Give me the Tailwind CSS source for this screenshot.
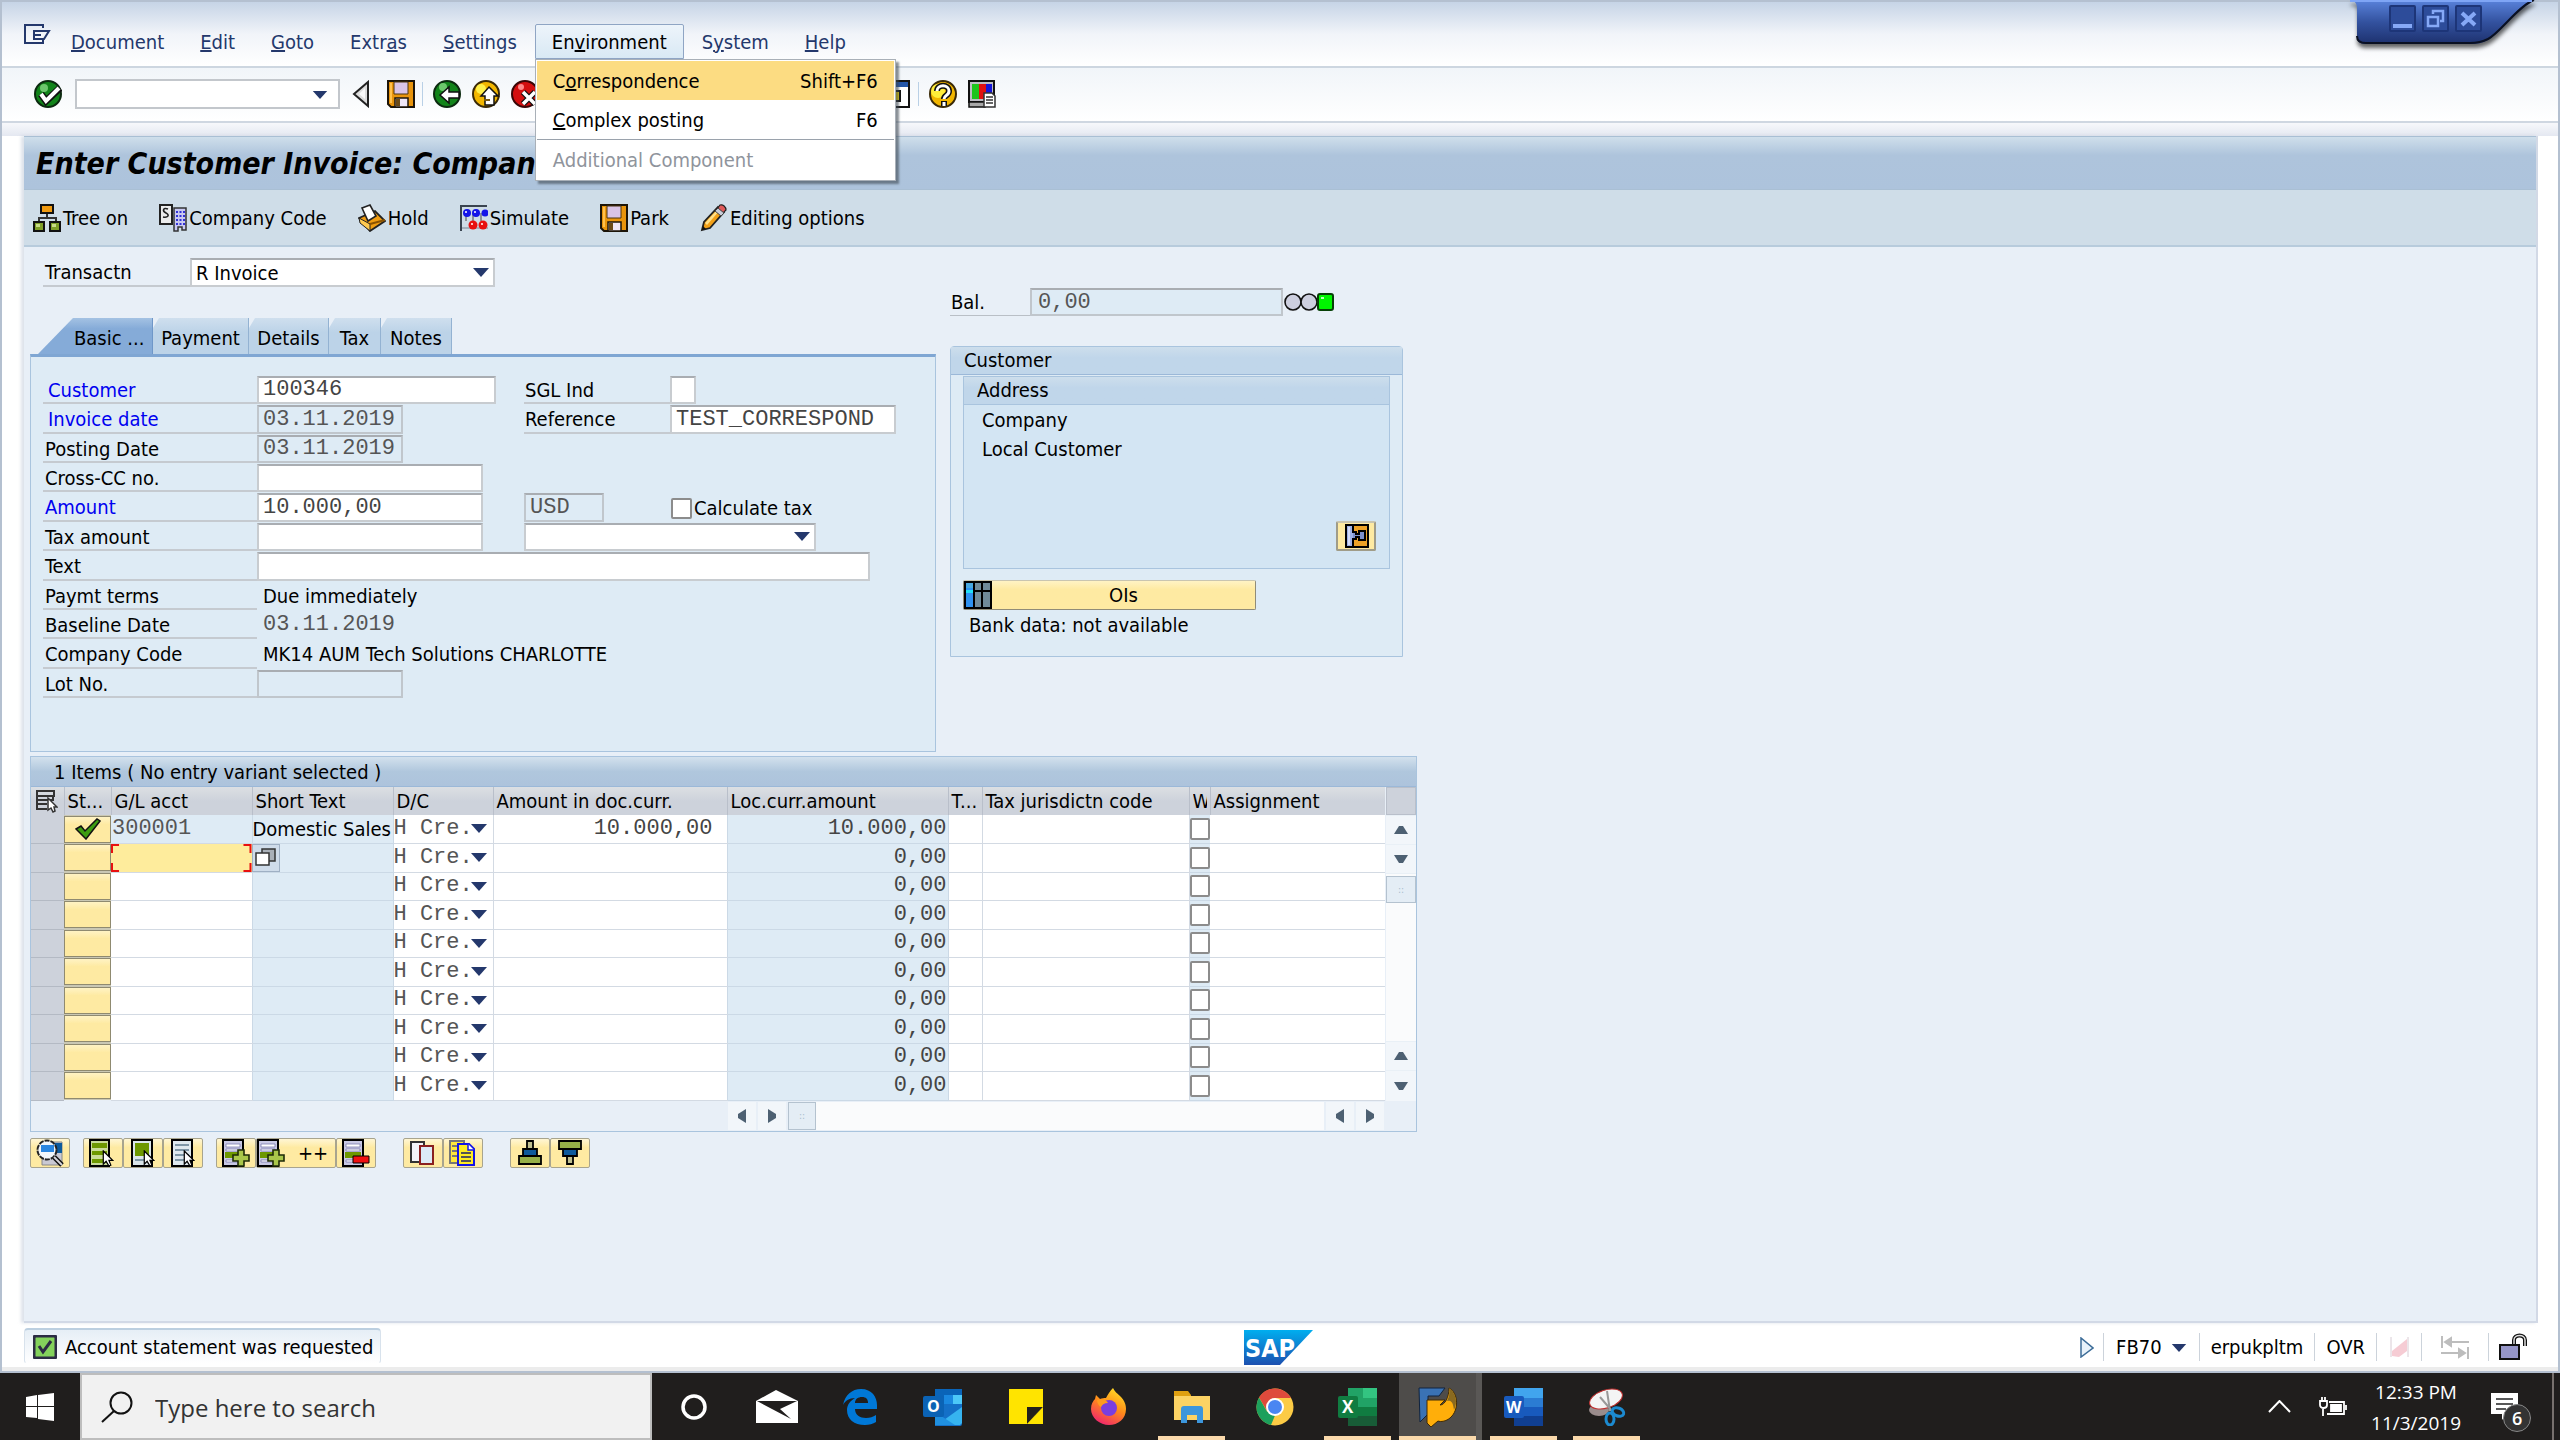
<!DOCTYPE html>
<html lang="en">
<head>
<meta charset="UTF-8" />
<meta name="viewport" content="width=device-width, initial-scale=1" />
<title>Enter Customer Invoice</title>
<script src="https://cdn.jsdelivr.net/npm/@tailwindcss/browser@4"></script>
</head>
<body class="min-h-screen flex flex-col bg-[#201e1d] text-black text-[20px] leading-6 font-['DejaVu_Sans_Condensed','Noto_Sans',sans-serif]">

<!-- shared icons -->
<svg class="hidden">
  <symbol id="arrow" viewBox="0 0 16 10"><path d="M0 1h16L8 10z" fill="#24386c"/></symbol>
  <symbol id="floppy" viewBox="0 0 28 28">
    <path d="M1 1h26v26H4l-3-3z" fill="#e8940c" stroke="#1c1408" stroke-width="2"/>
    <path d="M3 3h2v20H3z" fill="#ffc04c"/>
    <path d="M7 2h14v12H7z" fill="#d9c4e6" stroke="#4a3410"/>
    <path d="M8 18h13v9H8z" fill="#efe6f6" stroke="#1c1408" stroke-width="1.5"/>
    <path d="M9 19h4v7H9z" fill="#6a4a18"/>
  </symbol>
  <symbol id="cursor" viewBox="0 0 12 18"><path d="M1 1v14l3-3 3 5 2-1-2-5h4z" fill="#fff" stroke="#000" stroke-width="1.3"/></symbol>
  <symbol id="plus" viewBox="0 0 18 18"><path d="M6 1h6v5h5v6h-5v5H6v-5H1V6h5z" fill="#a9c64a" stroke="#1e2a08" stroke-width="1.6"/></symbol>
  <symbol id="rows" viewBox="0 0 22 28">
    <path d="M1 1h20v26H1z" fill="#c9c9e4" stroke="#000" stroke-width="2"/>
    <path d="M4 5h14v3H4zM4 10h14v2H4zM4 21h14v2H4z" fill="#fff" stroke="#6e6ea8" stroke-width=".7"/>
    <path d="M3 13h16v6H3z" fill="#6d9800"/>
  </symbol>
</svg>

<div class="flex-1 flex flex-col bg-white border-2 border-[#b4c0d0] relative">

  <header class="h-[66px] flex items-end pb-[7px] pl-[22px] border-b-2 border-[#cdd6e0] bg-linear-to-b from-[#c6d4e6] via-[#f1f4f9] to-white text-[#24386c]">
    <button aria-label="Window menu" class="self-start mt-[22px] w-[29px]">
      <svg class="w-[27px] h-[21px]" viewBox="0 0 27 21" fill="none" stroke="#24386c" stroke-width="2"><path d="M19 4V1H1v18h18v-3"/><path d="M10 7h15l-5 8H10z"/><path d="M10 11h7"/></svg>
    </button>
    <nav class="flex h-[35px]">
      <button class="px-[18px]"><u>D</u>ocument</button>
      <button class="px-[18px]"><u>E</u>dit</button>
      <button class="px-[18px]"><u>G</u>oto</button>
      <button class="px-[18px]">Extr<u>a</u>s</button>
      <button class="px-[18px]"><u>S</u>ettings</button>
      <div class="relative">
        <button class="h-[35px] px-4 border border-[#8fa5c4] rounded-t-xs bg-linear-to-b from-[#edf4fb] to-[#d9e9f4] text-black">En<u>v</u>ironment</button>
        <div role="menu" class="absolute z-10 top-full left-0 w-[361px] border border-[#a9b0b8] bg-white shadow-[3px_3px_2px_rgba(60,70,80,0.6)] text-black p-px">
          <button role="menuitem" class="w-full h-[39px] px-4 flex items-center justify-between bg-[#fcdc82]"><span>C<u>o</u>rrespondence</span><span>Shift+F6</span></button>
          <button role="menuitem" class="w-full h-[39px] px-4 flex items-center justify-between"><span><u>C</u>omplex posting</span><span>F6</span></button>
          <button role="menuitem" disabled class="w-full h-10 px-4 flex items-center border-t border-[#9aa2ac] text-[#8f949c]">Additional Component</button>
        </div>
      </div>
      <button class="px-[18px]">S<u>y</u>stem</button>
      <button class="px-[18px]"><u>H</u>elp</button>
    </nav>
  </header>

  <!-- window buttons -->
  <div class="absolute -top-[2px] right-[20px] w-[192px] h-[52px]">
    <svg class="absolute inset-0 drop-shadow-[1px_4px_2px_rgba(0,0,0,0.6)]" viewBox="0 0 192 52">
      <defs><linearGradient id="wb" x2="0" y2="1"><stop stop-color="#5a83dc"/><stop offset=".5" stop-color="#33529f"/><stop offset="1" stop-color="#1d316e"/></linearGradient></defs>
      <path d="M4 0h184c-14 6-34 34-46 40-6 3-10 4-18 4H20c-6 0-9-2-9-7V8c0-5-3-8-7-8z" fill="url(#wb)"/>
      <path d="M11 36c0 5 3 7 9 7h104c8 0 12-1 18-4 12-6 30-33 46-39" fill="none" stroke="#0a1022" stroke-width="2"/>
      <path d="M4 1h182" stroke="#7fa5f5" stroke-width="2"/>
    </svg>
    <div class="absolute left-[43px] top-[5px] flex gap-[6px]">
      <button aria-label="Minimize" class="size-[27px] rounded-xs border-2 border-[#1d3578] bg-[#2d4c9a]"><svg viewBox="0 0 23 23"><path d="M2 17h19v4H2z" fill="#86a9f7"/></svg></button>
      <button aria-label="Restore" class="size-[27px] rounded-xs border-2 border-[#1d3578] bg-[#2d4c9a]"><svg viewBox="0 0 23 23" fill="none" stroke="#86a9f7" stroke-width="2.5"><path d="M4 10h10v9H4zM9 7V4h10v10h-3"/></svg></button>
      <button aria-label="Close" class="size-[27px] rounded-xs border-2 border-[#1d3578] bg-[#2d4c9a]"><svg viewBox="0 0 23 23" stroke="#86a9f7" stroke-width="4"><path d="M5 6l13 12M18 6L5 18"/></svg></button>
    </div>
  </div>

  <div class="h-[55px] flex items-center pl-8 pb-[2px] border-b-2 border-[#cfd7e1] bg-linear-to-b from-[#f1f5f9] to-white">
    <button aria-label="Enter" class="size-7">
      <svg viewBox="0 0 28 28"><circle cx="14" cy="14" r="13" fill="#12841a" stroke="#0c2a10" stroke-width="2"/><circle cx="10" cy="8" r="4" fill="#6cc76c"/><path d="M7 14l5 7L26 8" fill="none" stroke="#111" stroke-width="7"/><path d="M7 14l5 7L25 8" fill="none" stroke="#fff" stroke-width="4"/></svg>
    </button>
    <div class="relative ml-[13px]">
      <select aria-label="Command" class="block appearance-none w-[265px] h-[30px] border-2 border-[#c3c7cc] bg-white"><option></option></select>
      <svg class="absolute right-3 top-[11px] w-4 h-[9px] pointer-events-none"><use href="#arrow"/></svg>
    </div>
    <button aria-label="Collapse" class="ml-3 w-[18px] h-7"><svg viewBox="0 0 18 28"><path d="M16 2v24L2 14z" fill="#dcdcdc" stroke="#222" stroke-width="2"/><path d="M13 8v11l-6-5z" fill="#f8f8f8"/></svg></button>
    <button aria-label="Save" class="ml-[17px] size-7"><svg viewBox="0 0 28 28"><use href="#floppy"/></svg></button>
    <span class="ml-[7px] w-px h-6 bg-[#b9d0e6]"></span>
    <button aria-label="Back" class="ml-[10px] size-7">
      <svg viewBox="0 0 28 28"><circle cx="14" cy="14" r="13" fill="#12841a" stroke="#0c2a10" stroke-width="2"/><circle cx="10" cy="7" r="4" fill="#6cc76c"/><path d="M7 15l9-8v5h10v6H16v5z" fill="#fff" stroke="#111" stroke-width="1.5"/></svg>
    </button>
    <button aria-label="Exit" class="ml-[11px] size-7">
      <svg viewBox="0 0 28 28"><circle cx="14" cy="14" r="13" fill="#f2b600" stroke="#3a2a08" stroke-width="2"/><circle cx="9" cy="9" r="5" fill="#fff04a"/><path d="M17 7l9 9h-4v9h-9v-9H9z" fill="#fff" stroke="#111" stroke-width="1.5"/><path d="M12 20h6" stroke="#7a5a10" stroke-width="2"/></svg>
    </button>
    <button aria-label="Cancel" class="ml-[11px] size-7">
      <svg viewBox="0 0 28 28"><circle cx="14" cy="14" r="13" fill="#d40f0f" stroke="#3a0606" stroke-width="2"/><circle cx="10" cy="7" r="3" fill="#ff8a8a"/><path d="M12 12l12 12M24 12L12 24" stroke="#111" stroke-width="6"/><path d="M12 12l12 12M24 12L12 24" stroke="#fff" stroke-width="3.5"/></svg>
    </button>
    <button aria-label="New session" class="ml-[343px] size-7">
      <svg viewBox="0 0 28 28"><path d="M1 1h26v26H1z" fill="#fff" stroke="#111" stroke-width="2"/><path d="M2 2h24v5H2z" fill="#2255a8"/><path d="M8 11h10v10H8z" fill="#ffe000" stroke="#111" stroke-width="2"/></svg>
    </button>
    <span class="ml-2 w-px h-6 bg-[#b9d0e6]"></span>
    <button aria-label="Help" class="ml-[10px] size-7">
      <svg viewBox="0 0 28 28"><circle cx="14" cy="14" r="13" fill="#f2b600" stroke="#3a2a08" stroke-width="2"/><circle cx="9" cy="11" r="7" fill="#ffee3a"/><path d="M8 11c0-7 12-7 12 0 0 5-5 4-5 8M15 21v5" fill="none" stroke="#111" stroke-width="6"/><path d="M8 11c0-7 12-7 12 0 0 5-5 4-5 8M15 22v4" fill="none" stroke="#fff" stroke-width="3"/></svg>
    </button>
    <button aria-label="Customize layout" class="ml-[11px] size-7">
      <svg viewBox="0 0 28 28"><path d="M1 1h25v21H1z" fill="#bdbdc4" stroke="#111" stroke-width="2"/><path d="M4 4h7v15H4z" fill="#1cc41c"/><path d="M11 4h7v15h-7z" fill="#e01010"/><path d="M18 4h6v15h-6z" fill="#1414d8"/><path d="M1 22h16v5H1z" fill="#a8a8a8" stroke="#111" stroke-width="1.5"/><path d="M16 13h8l3 3v11H16z" fill="#fff" stroke="#333" stroke-width="1.5"/><path d="M18 17h7M18 20h7M18 23h7" stroke="#333" stroke-width="1.3"/></svg>
    </button>
  </div>

  <div class="h-[13px] bg-linear-to-b from-[#f7f8fb] to-[#e4e8f1]"></div>

  <main class="flex-1 flex flex-col ml-[22px] mr-[20px] bg-[#e8eff7] border-r-2 border-b-2 border-[#d2d9e6] shadow-[-3px_0_3px_rgba(190,200,215,0.5)]">
    <h1 class="h-[54px] pl-3 pt-[2px] flex items-center border-y border-[#a9bfd4] bg-linear-to-b from-[#cfdfeb] via-[#aec4dc] via-35% to-[#adc3dc] text-[30px] font-bold italic font-['DejaVu_Sans_Condensed','Open_Sans',sans-serif]">Enter Customer Invoice: Company</h1>

    <div class="h-[57px] pl-[9px] flex items-center gap-[31px] bg-[#cfdde8] border-b-2 border-[#b7cbdc]">
      <button class="flex items-center gap-[2px]">
        <svg class="size-7" viewBox="0 0 28 28"><path d="M14 9v5M6 19v-5h17v5" fill="none" stroke="#333" stroke-width="2"/><path d="M8 1h12v8H8z" fill="#f09a10" stroke="#111" stroke-width="2"/><path d="M1 18h10v9H1zM17 18h10v9H17z" fill="#7f9f28" stroke="#111" stroke-width="2"/><path d="M3 20h4v3H3zM19 20h4v3h-4z" fill="#c8dc88"/></svg>Tree on
      </button>
      <button class="flex items-center gap-[2px]">
        <svg class="size-7" viewBox="0 0 28 28"><path d="M1 1h12v19H1z" fill="#ececec" stroke="#222" stroke-width="2"/><path d="M9 5c-5-2-6 2-2 4s2 5-3 4" fill="none" stroke="#222" stroke-width="1.6"/><path d="M15 4h12v22h-4v-3h-4v4h-4z" fill="#c9c9f2" stroke="#333" stroke-width="1.5"/><path d="M17 8h9M17 12h9M17 16h9M17 20h9" stroke="#3232d8" stroke-width="2" stroke-dasharray="2 1.5"/></svg>Company Code
      </button>
      <button class="flex items-center gap-[2px]">
        <svg class="size-7" viewBox="0 0 28 28"><path d="M1 14L17 7l10 10-15 10z" fill="#ef9c10" stroke="#222" stroke-width="1.8"/><path d="M1 14l11 6v7L2 19z" fill="#ffca50" stroke="#222"/><path d="M4 4l8-3 6 11-8 5z" fill="#fff" stroke="#222" stroke-width="1.6"/><path d="M12 20l15-4" stroke="#8a5200" stroke-width="2"/></svg>Hold
      </button>
      <button class="flex items-center gap-[2px]">
        <svg class="size-7" viewBox="0 0 28 28"><path d="M1 27V2h26" fill="none" stroke="#3a4450" stroke-width="2"/><path d="M6 9v8M13 9v8M21 9v8" stroke="#444"/><path d="M2 24h26" stroke="#7a8794"/><g fill="#1414e8"><circle cx="7" cy="9" r="4"/><circle cx="16" cy="9" r="4"/><circle cx="25" cy="9" r="3.5"/></g><g fill="#e81010"><circle cx="13" cy="21" r="4.5"/><circle cx="23" cy="21" r="4.5"/></g><g fill="#fff"><circle cx="6" cy="8" r="1"/><circle cx="15" cy="8" r="1"/><circle cx="12" cy="20" r="1"/><circle cx="22" cy="20" r="1"/></g></svg>Simulate
      </button>
      <button class="flex items-center gap-[2px]"><svg class="size-7" viewBox="0 0 28 28"><use href="#floppy"/></svg>Park</button>
      <button class="flex items-center gap-[2px]">
        <svg class="size-7" viewBox="0 0 28 28"><path d="M2 26l2-8L18 3l6 5L10 24z" fill="#f2a018" stroke="#222" stroke-width="1.8"/><path d="M5 19L18 5l2 1L7 21z" fill="#ffe08a"/><path d="M17 5l3-4c3-1 6 2 6 5l-3 3z" fill="#e05a5a" stroke="#222" stroke-width="1.2"/><path d="M15 7l3-3 6 5-3 3z" fill="#c9ccd8" stroke="#444"/><path d="M2 26l1-4 3 3z" fill="#111"/></svg>Editing options
      </button>
    </div>

    <div class="flex gap-[14px] pl-[6px]">
      <div class="w-[906px] pt-[11px]">
        <div class="flex pl-[13px]">
          <label for="transactn" class="w-[147px] h-[29px] pl-[2px] leading-7 border-b-2 border-[#c5cad0]">Transactn</label>
          <div class="relative">
            <select id="transactn" class="block appearance-none w-[305px] h-[29px] pl-1 leading-6 border-2 border-t-[#a9adb2] border-[#c8ccd0] bg-white"><option>R Invoice</option></select>
            <svg class="absolute right-[6px] top-[9px] w-4 h-[10px] pointer-events-none"><use href="#arrow"/></svg>
          </div>
        </div>

        <div role="tablist" class="mt-[31px] pl-2 flex h-9">
          <button role="tab" aria-selected="true" class="w-[115px] pl-9 pt-[3px] text-left whitespace-nowrap border-r border-[#6f97c8] bg-linear-to-b from-[#a4c2e3] to-[#85abd8] to-30% [clip-path:polygon(35px_0,100%_0,100%_100%,0_100%)]">Basic ...</button>
          <button role="tab" class="w-[96px] pt-[3px] border-r border-[#93b2d2] bg-linear-to-b from-[#cfdfee] to-[#bcd3e8] to-40% [clip-path:polygon(6px_0,100%_0,100%_100%,0_100%,0_10px)]">Payment</button>
          <button role="tab" class="w-[80px] pt-[3px] border-r border-[#93b2d2] bg-linear-to-b from-[#cfdfee] to-[#bcd3e8] to-40% [clip-path:polygon(6px_0,100%_0,100%_100%,0_100%,0_10px)]">Details</button>
          <button role="tab" class="w-[52px] pt-[3px] border-r border-[#93b2d2] bg-linear-to-b from-[#cfdfee] to-[#bcd3e8] to-40% [clip-path:polygon(6px_0,100%_0,100%_100%,0_100%,0_10px)]">Tax</button>
          <button role="tab" class="w-[71px] pt-[3px] border-r border-[#93b2d2] bg-linear-to-b from-[#cfdfee] to-[#bcd3e8] to-40% [clip-path:polygon(6px_0,100%_0,100%_100%,0_100%,0_10px)]">Notes</button>
        </div>

        <form class="h-[398px] pl-3 pt-[19px] border border-[#a9c4de] border-t-3 border-t-[#7fa6d3] bg-[#deebf5]">
          <div class="grid grid-cols-[214px_267px_146px_1fr] grid-rows-[repeat(11,minmax(0,1fr))] h-[323px] leading-[28px]">
            <label for="customer" class="mb-px pl-[5px] text-[#0000f0] border-b-2 border-[#c5cad0]">Customer</label>
            <input id="customer" value="100346" class="mb-px w-[239px] px-1 border-2 border-t-[#a9adb2] border-[#c8ccd0] bg-white text-[22px] text-[#444] font-['Liberation_Mono',monospace]" />
            <label for="sgl" class="mb-px pl-px border-b-2 border-[#c5cad0]">SGL Ind</label>
            <input id="sgl" class="mb-px w-[26px] border-2 border-t-[#a9adb2] border-[#c8ccd0] bg-white" />

            <label for="invdate" class="mb-px pl-[5px] text-[#0000f0] border-b-2 border-[#c5cad0]">Invoice date</label>
            <input id="invdate" value="03.11.2019" readonly class="mb-px w-[146px] px-1 border-2 border-t-[#a9adb2] border-[#c0c6cc] text-[22px] text-[#555] font-['Liberation_Mono',monospace]" />
            <label for="reference" class="mb-px pl-px border-b-2 border-[#c5cad0]">Reference</label>
            <input id="reference" value="TEST_CORRESPOND" class="mb-px w-[226px] px-1 border-2 border-t-[#a9adb2] border-[#c8ccd0] bg-white text-[22px] text-[#444] font-['Liberation_Mono',monospace]" />

            <label for="postdate" class="mb-px pl-[2px] border-b-2 border-[#c5cad0]">Posting Date</label>
            <input id="postdate" value="03.11.2019" readonly class="col-span-3 mb-px w-[146px] px-1 border-2 border-t-[#a9adb2] border-[#c0c6cc] text-[22px] text-[#555] font-['Liberation_Mono',monospace]" />

            <label for="crosscc" class="mb-px pl-[2px] border-b-2 border-[#c5cad0]">Cross-CC no.</label>
            <input id="crosscc" class="col-span-3 mb-px w-[226px] border-2 border-t-[#a9adb2] border-[#c8ccd0] bg-white" />

            <label for="amount" class="mb-px pl-[2px] text-[#0000f0] border-b-2 border-[#c5cad0]">Amount</label>
            <input id="amount" value="10.000,00" class="mb-px w-[226px] px-1 border-2 border-t-[#a9adb2] border-[#c8ccd0] bg-white text-[22px] text-[#444] font-['Liberation_Mono',monospace]" />
            <input aria-label="Currency" value="USD" readonly class="mb-px w-20 px-1 border-2 border-t-[#a9adb2] border-[#c0c6cc] text-[22px] text-[#555] font-['Liberation_Mono',monospace]" />
            <label class="flex items-center gap-[2px] pl-px whitespace-nowrap"><input type="checkbox" class="appearance-none size-[21px] rounded-xs border-2 border-[#8c8c8c] bg-white" />Calculate tax</label>

            <label for="taxamount" class="mb-px pl-[2px] border-b-2 border-[#c5cad0]">Tax amount</label>
            <input id="taxamount" class="mb-px w-[226px] border-2 border-t-[#a9adb2] border-[#c8ccd0] bg-white" />
            <div class="col-span-2 relative mb-px w-[292px]">
              <select aria-label="Tax code" class="block appearance-none size-full border-2 border-t-[#a9adb2] border-[#c8ccd0] bg-white"><option></option></select>
              <svg class="absolute right-[6px] top-2 w-4 h-[10px] pointer-events-none"><use href="#arrow"/></svg>
            </div>

            <label for="text" class="mb-px pl-[2px] border-b-2 border-[#c5cad0]">Text</label>
            <input id="text" class="col-span-3 mb-px w-[613px] border-2 border-t-[#a9adb2] border-[#c8ccd0] bg-white" />

            <span class="mb-px pl-[2px] border-b-2 border-[#c5cad0]">Paymt terms</span>
            <span class="col-span-3 pl-[6px]">Due immediately</span>

            <span class="mb-px pl-[2px] border-b-2 border-[#c5cad0]">Baseline Date</span>
            <span class="col-span-3 pl-[6px] text-[22px] text-[#555] font-['Liberation_Mono',monospace]">03.11.2019</span>

            <span class="mb-px pl-[2px] border-b-2 border-[#c5cad0]">Company Code</span>
            <span class="col-span-3 pl-[6px]">MK14 AUM Tech Solutions CHARLOTTE</span>

            <label for="lot" class="mb-px pl-[2px] border-b-2 border-[#c5cad0]">Lot No.</label>
            <input id="lot" readonly class="col-span-3 mb-px w-[146px] border-2 border-t-[#a9adb2] border-[#c0c6cc]" />
          </div>
        </form>
      </div>

      <div class="w-[453px] pt-[41px]">
        <div class="flex items-center">
          <label for="bal" class="w-20 h-7 pl-px leading-7 border-b border-[#b9bfc6]">Bal.</label>
          <input id="bal" value="0,00" readonly class="w-[253px] h-7 px-[6px] border-2 border-t-[#a9adb2] border-[#c0c6cc] bg-[#deebf5] text-[22px] text-[#555] font-['Liberation_Mono',monospace]" />
          <svg class="ml-px w-[50px] h-[18px]" viewBox="0 0 50 18"><circle cx="9" cy="9" r="8" fill="#cdcfdf" stroke="#111" stroke-width="1.6"/><circle cx="25" cy="9" r="8" fill="#cdcfdf" stroke="#111" stroke-width="1.6"/><rect x="34" y="1" width="15" height="16" rx="2" fill="#00f500" stroke="#064006" stroke-width="2"/><path d="M37 4h3v2h-3z" fill="#b8ffb8"/></svg>
        </div>

        <section class="mt-[30px] h-[311px] border border-[#a9c4de] rounded-t-sm bg-[#deebf5]">
          <h2 class="h-7 pl-[13px] leading-[27px] border-b border-[#9bb8d8] bg-linear-to-b from-[#cddeec] to-[#c0d6ea] to-40%">Customer</h2>
          <div class="mt-px ml-3 w-[427px] h-[193px] border border-[#a9c4de] bg-[#d3e5f3] flex flex-col">
            <h3 class="h-7 pl-[13px] leading-[27px] border-b border-[#a9c4de] bg-linear-to-b from-[#cddeec] to-[#c0d6ea] to-40%">Address</h3>
            <p class="pl-[18px] pt-px leading-[29px]">Company<br />Local Customer</p>
            <button aria-label="Customer master" class="mt-auto mb-[17px] ml-auto mr-[13px] w-10 h-[30px] pl-px grid place-items-center rounded-xs border-2 border-t-[#c9c5b0] border-[#a09c88] bg-[#feeaa2]">
              <svg class="size-[24px]" viewBox="0 0 24 24"><path d="M1 1h22v22H1z" fill="#eda227" stroke="#000" stroke-width="2"/><path d="M2 2h6v20H2z" fill="#9fb2e6"/><path d="M8 2v6h3v2h3V7h6v9h-6v-3h-3v2H8v7" fill="#7d90cc" stroke="#000" stroke-width="2"/><path d="M3 3h2v18H3z" fill="#d3dcf8"/></svg>
            </button>
          </div>
          <button class="mt-[11px] ml-3 w-[293px] h-[30px] flex items-center rounded-xs border border-t-[#c9c5b0] border-[#908c78] bg-linear-to-b from-[#fff3c4] to-[#feeaa2] to-30%">
            <svg class="size-7" viewBox="0 0 28 28"><path d="M1 1h26v26H1z" fill="#708a98" stroke="#000" stroke-width="2"/><path d="M2 2h7v24H2z" fill="#2f92f0"/><path d="M2 2h7v5H2z" fill="#48a8e0"/><path d="M2 9h7v3H2z" fill="#22e0f8"/><path d="M10 1v26M18 1v26M10 10h17" stroke="#000" stroke-width="2"/></svg>
            <span class="flex-1 text-center">OIs</span>
          </button>
          <p class="mt-[3px] ml-[18px]">Bank data: not available</p>
        </section>
      </div>
    </div>

    <section class="mt-1 ml-[6px] w-[1387px] border border-[#a9c4de]">
      <h2 class="h-[30px] pl-[23px] leading-[30px] border-b border-[#9bb8d8] bg-linear-to-b from-[#d3e1ed] via-[#b0c7dd] to-[#adc3dc]">1 Items ( No entry variant selected )</h2>
      <div class="flex gap-px">
        <table class="table-fixed w-[1354px] border-collapse">
          <colgroup><col class="w-[33px]" /><col class="w-[47px]" /><col class="w-[141px]" /><col class="w-[141px]" /><col class="w-[100px]" /><col class="w-[234px]" /><col class="w-[221px]" /><col class="w-[34px]" /><col class="w-[207px]" /><col class="w-[21px]" /><col class="w-[175px]" /></colgroup>
          <thead>
            <tr class="h-7 bg-linear-to-b from-[#dcdfe3] to-[#cdd2db] to-50% text-left whitespace-nowrap">
              <th aria-label="Select all" class="p-0"><svg class="ml-[4px] size-[23px]" viewBox="0 0 23 23"><path d="M2 1h17v5H2zM2 6v13h10M2 10h16v-4M2 14h10" fill="none" stroke="#333" stroke-width="2"/><path d="M13 8v12l3-2 2 4 2-1-1-4h3z" fill="#fff" stroke="#333" stroke-width="1.5"/></svg></th>
              <th class="p-0 pl-[3px] border-l border-[#b9bfca] font-normal">St...</th>
              <th class="p-0 pl-[3px] border-l border-[#b9bfca] font-normal">G/L acct</th>
              <th class="p-0 pl-[3px] border-l border-[#b9bfca] font-normal">Short Text</th>
              <th class="p-0 pl-[3px] border-l border-[#b9bfca] font-normal">D/C</th>
              <th class="p-0 pl-[3px] border-l border-[#b9bfca] font-normal">Amount in doc.curr.</th>
              <th class="p-0 pl-[3px] border-l border-[#b9bfca] font-normal">Loc.curr.amount</th>
              <th class="p-0 pl-[3px] border-l border-[#b9bfca] font-normal overflow-hidden">T...</th>
              <th class="p-0 pl-[3px] border-l border-[#b9bfca] font-normal">Tax jurisdictn code</th>
              <th class="p-0 pl-[3px] border-l border-[#b9bfca] font-normal"><div class="w-[14px] overflow-hidden">W</div></th>
              <th class="p-0 pl-[3px] border-l border-[#b9bfca] font-normal">Assignment</th>
            </tr>
          </thead>
          <tbody id="items"></tbody>
        </table>

        <div class="w-[30px] flex flex-col gap-px bg-[#e9f0f6]">
          <div class="h-7 border border-[#b9bfca] bg-[#cdd2db]"></div>
          <button aria-label="First row" class="h-7 grid place-items-center bg-[#f2f6fa]"><svg class="w-[14px] h-[8px]" viewBox="0 0 14 8"><path d="M0 8h14L9 0H5z" fill="#4d6072"/></svg></button>
          <button aria-label="Next row" class="h-7 grid place-items-center bg-[#f2f6fa]"><svg class="w-[14px] h-[8px]" viewBox="0 0 14 8"><path d="M0 0h14L9 8H5z" fill="#4d6072"/></svg></button>
          <div class="flex-1 pt-[2px] bg-[#fafbfc]"><div class="h-[27px] grid place-items-center border border-[#b4c2cf] bg-[#e4edf5] text-[10px] text-[#a9bccd]">::</div></div>
          <button aria-label="Previous row" class="h-7 grid place-items-center bg-[#f2f6fa]"><svg class="w-[14px] h-[8px]" viewBox="0 0 14 8"><path d="M0 8h14L9 0H5z" fill="#4d6072"/></svg></button>
          <button aria-label="Last row" class="h-[30px] grid place-items-center bg-[#f2f6fa]"><svg class="w-[14px] h-[8px]" viewBox="0 0 14 8"><path d="M0 0h14L9 8H5z" fill="#4d6072"/></svg></button>
        </div>
      </div>

      <div class="h-[30px] pl-[697px] pr-[32px] pt-px pb-px flex gap-[2px]">
        <button aria-label="First column" class="w-[28px] grid place-items-center bg-[#f2f6fa]"><svg class="w-[8px] h-[14px]" viewBox="0 0 8 14"><path d="M8 0v14L0 9V5z" fill="#4d6072"/></svg></button>
        <button aria-label="Next column" class="w-[28px] grid place-items-center bg-[#f2f6fa]"><svg class="w-[8px] h-[14px]" viewBox="0 0 8 14"><path d="M0 0v14l8-5V5z" fill="#4d6072"/></svg></button>
        <div class="flex-1 bg-[#fafbfc]"><div class="w-[28px] h-full grid place-items-center border border-[#b4c2cf] bg-[#e4edf5] text-[10px] text-[#a9bccd]">::</div></div>
        <button aria-label="Previous column" class="w-[28px] grid place-items-center bg-[#f2f6fa]"><svg class="w-[8px] h-[14px]" viewBox="0 0 8 14"><path d="M8 0v14L0 9V5z" fill="#4d6072"/></svg></button>
        <button aria-label="Last column" class="w-[28px] grid place-items-center bg-[#f2f6fa]"><svg class="w-[8px] h-[14px]" viewBox="0 0 8 14"><path d="M0 0v14l8-5V5z" fill="#4d6072"/></svg></button>
      </div>
    </section>

    <div class="mt-[6px] ml-[6px] flex h-[30px] gap-[13px]">
      <button aria-label="Details" class="w-10 grid place-items-center rounded-xs border border-[#a8a48e] bg-linear-to-b from-[#fff6d4] to-[#feeaa2] to-30%"><svg class="size-[28px]" viewBox="0 0 28 28"><path d="M6 3h20v23H6z" fill="#c9c9d4" stroke="#888"/><path d="M17 4h9v10h-9z" fill="#0d5a9c"/><circle cx="11" cy="11" r="9.500" fill="#f2f6fa" stroke="#222" stroke-width="2" stroke-dasharray="5 1"/><path d="M5 6h13v7H5z" fill="#2a86e0"/><path d="M18 18l8 8" stroke="#111" stroke-width="5"/><path d="M18 18l8 8" stroke="#d4d4dc" stroke-width="2"/></svg></button>
      <div class="flex">
        <button aria-label="Select all" class="w-10 pr-[5px] grid place-items-center rounded-xs border border-[#a8a48e] bg-linear-to-b from-[#fff6d4] to-[#feeaa2] to-30%"><svg class="size-[28px]" viewBox="0 0 28 28"><path d="M3 1h19v26H3z" fill="#c9dc98" stroke="#000" stroke-width="2"/><path d="M5 4h15v5H5zM5 12h15v4H5zM5 20h15v4H5z" fill="#6d9800"/><use href="#cursor" x="15" y="11" width="12" height="17"/></svg></button>
        <button aria-label="Select block" class="w-10 pr-[3px] grid place-items-center rounded-xs border border-[#a8a48e] bg-linear-to-b from-[#fff6d4] to-[#feeaa2] to-30%"><svg class="size-[28px]" viewBox="0 0 28 28"><path d="M4 1h20v26H4z" fill="#dbe6ea" stroke="#000" stroke-width="2"/><path d="M7 4h14v13H7z" fill="#6d9800"/><path d="M7 21h14" stroke="#8098a8" stroke-width="2"/><use href="#cursor" x="15" y="11" width="12" height="17"/></svg></button>
        <button aria-label="Deselect all" class="w-10 pr-[3px] grid place-items-center rounded-xs border border-[#a8a48e] bg-linear-to-b from-[#fff6d4] to-[#feeaa2] to-30%"><svg class="size-[28px]" viewBox="0 0 28 28"><path d="M4 1h20v26H4z" fill="#dfe9ee" stroke="#000" stroke-width="2"/><path d="M7 6h14M7 11h14M7 16h14M7 21h14" stroke="#7f97a6" stroke-width="2"/><use href="#cursor" x="15" y="11" width="12" height="17"/></svg></button>
      </div>
      <div class="flex">
        <button aria-label="Insert row" class="w-10 pr-px grid place-items-center rounded-xs border border-[#a8a48e] bg-linear-to-b from-[#fff6d4] to-[#feeaa2] to-30%"><svg class="size-[28px]" viewBox="0 0 28 28"><use href="#rows" width="22" height="28"/><use href="#plus" x="10" y="10" width="18" height="18"/></svg></button>
        <button aria-label="Insert several rows" class="w-20 flex items-center gap-[13px] rounded-xs border border-[#a8a48e] bg-linear-to-b from-[#fff6d4] to-[#feeaa2] to-30%"><svg class="size-[28px] shrink-0" viewBox="0 0 28 28"><use href="#rows" width="22" height="28"/><use href="#plus" x="10" y="10" width="18" height="18"/></svg>++</button>
        <button aria-label="Delete row" class="w-10 pr-px grid place-items-center rounded-xs border border-[#a8a48e] bg-linear-to-b from-[#fff6d4] to-[#feeaa2] to-30%"><svg class="size-[28px]" viewBox="0 0 28 28"><use href="#rows" width="22" height="28"/><path d="M11 17h16v7H11z" fill="#f01010" stroke="#000"/></svg></button>
      </div>
      <div class="ml-[14px] flex">
        <button aria-label="Copy" class="w-10 pr-[3px] grid place-items-center rounded-xs border border-[#a8a48e] bg-linear-to-b from-[#fff6d4] to-[#feeaa2] to-30%"><svg class="size-[28px]" viewBox="0 0 28 28"><path d="M3 3h13v20H3z" fill="#f4f4f8" stroke="#333" stroke-width="2"/><path d="M12 7h13v18H12z" fill="#dceaf6" stroke="#8a2020" stroke-width="2"/></svg></button>
        <button aria-label="Duplicate" class="w-10 pr-[3px] grid place-items-center rounded-xs border border-[#a8a48e] bg-linear-to-b from-[#fff6d4] to-[#feeaa2] to-30%"><svg class="size-[28px]" viewBox="0 0 28 28"><path d="M2 2h14v22H2z" fill="#ffe83a" stroke="#777" stroke-width="2"/><path d="M4 7h6M4 12h6M4 17h6" stroke="#777" stroke-width="2"/><path d="M10 5h11l5 5v16H10z" fill="#ffec20" stroke="#1414e8" stroke-width="2"/><path d="M20 5v6h6" fill="#fff" stroke="#1414e8" stroke-width="1.5"/><path d="M13 14h10M13 18h10M13 22h10" stroke="#555" stroke-width="2"/></svg></button>
      </div>
      <div class="ml-[14px] flex">
        <button aria-label="Sort ascending" class="w-10 grid place-items-center rounded-xs border border-[#a8a48e] bg-linear-to-b from-[#fff6d4] to-[#feeaa2] to-30%"><svg class="size-[28px]" viewBox="0 0 28 28" stroke="#000" stroke-width="1.800"><path d="M11 2h6v8h-6z" fill="#c0c090"/><path d="M7 10h14v7H7z" fill="#0d5a9c"/><path d="M3 17h22v8H3z" fill="#96b048"/></svg></button>
        <button aria-label="Sort descending" class="w-10 grid place-items-center rounded-xs border border-[#a8a48e] bg-linear-to-b from-[#fff6d4] to-[#feeaa2] to-30%"><svg class="size-[28px]" viewBox="0 0 28 28" stroke="#000" stroke-width="1.800"><path d="M3 2h22v8H3z" fill="#96b048"/><path d="M7 10h14v7H7z" fill="#0d5a9c"/><path d="M11 17h6v8h-6z" fill="#c0c090"/></svg></button>
      </div>
    </div>
  </main>

  <footer class="h-12 flex items-center justify-between pl-[22px] pr-[31px] pt-[2px] border-b-4 border-[#ececec] relative">
    <div class="w-[357px] h-9 pl-2 flex items-center gap-2 rounded-sm border border-t-2 border-t-[#bccfe0] border-x-[#d8e2ec] border-b-white bg-linear-to-b from-[#e6eef6] to-white whitespace-nowrap">
      <svg class="w-[24px] h-[24px] shrink-0" viewBox="0 0 24 24"><rect x="1" y="1" width="22" height="22" rx="2" fill="#84d25c" stroke="#2c2c44" stroke-width="3"/><path d="M6 11l4 6 8-11" fill="none" stroke="#2c2c44" stroke-width="3"/></svg>
      <span>Account statement was requested</span>
    </div>
    <svg class="absolute left-[1242px] top-[7px] w-[69px] h-[35px]" viewBox="0 0 69 35">
      <defs><linearGradient id="sap" x2="0" y2="1"><stop stop-color="#00aeef"/><stop offset="1" stop-color="#1c50b0"/></linearGradient></defs>
      <path d="M0 0h69L36 35H0z" fill="url(#sap)"/>
      <text x="1" y="27" fill="#fff" font-family="DejaVu Sans Condensed" font-size="25" font-weight="bold">SAP</text>
    </svg>
    <div class="flex items-center h-7 pt-[2px] [&>*]:shrink-0">
      <svg class="w-[14px] h-[21px] mr-[9px]" viewBox="0 0 14 21"><path d="M1 1v19l12-9z" fill="#e8f2fa" stroke="#3c6c98" stroke-width="1.500"/></svg>
      <button class="h-7 px-3 flex items-center gap-[9px] border-l border-[#ccd3db]">FB70 <svg class="w-4 h-[9px]"><use href="#arrow"/></svg></button>
      <span class="h-7 px-[11px] leading-7 border-l border-[#ccd3db]">erpukpltm</span>
      <span class="h-7 px-[11px] leading-7 border-l border-[#ccd3db]">OVR</span>
      <span class="h-7 w-[45px] grid place-items-center border-l border-[#ccd3db]"><svg class="w-[19px] h-[22px]" viewBox="0 0 19 22"><path d="M1 1v20M18 1v20" stroke="#d8ccd4"/><path d="M2 20V15L17 3v12l-8 6z" fill="#f6ccd4"/></svg></span>
      <span class="h-7 w-[67px] grid place-items-center border-l border-[#ccd3db]"><svg class="w-[28px] h-[23px]" viewBox="0 0 28 23" stroke="#bdbdbd" stroke-width="2" fill="#bdbdbd"><path d="M1 0v12M27 11v12M4 6h24M0 17h24"/><path d="M4 6l6-4v8zM24 17l-6-4v8z"/></svg></span>
      <span class="h-7 pl-[10px] grid place-items-center border-l border-[#ccd3db]"><svg class="size-7" viewBox="0 0 28 28"><path d="M15 12V7c0-6 11-6 11 0v6" fill="none" stroke="#111" stroke-width="4"/><path d="M15 12V7c0-6 11-6 11 0v6" fill="none" stroke="#ddd" stroke-width="1.500"/><path d="M1 12h19v14H1z" fill="#9696c8" stroke="#111" stroke-width="2"/></svg></span>
    </div>
  </footer>
</div>

<!-- taskbar -->
<div class="h-[67px] flex items-stretch text-white font-['Open_Sans','Noto_Sans',sans-serif]">
  <button aria-label="Start" class="w-20 grid place-items-center"><svg class="size-7" viewBox="0 0 28 28" fill="#fff"><path d="M0 4l11-2v11H0zM12 2l16-2v13H12zM0 14h11v11L0 24zM12 14h16v14l-16-2z"/></svg></button>
  <div class="w-[572px] flex items-center border-2 border-[#bdbdbd] bg-[#f1f1f1]">
    <svg class="ml-[19px] size-8 shrink-0" viewBox="0 0 32 32" fill="none" stroke="#111" stroke-width="2"><circle cx="20" cy="12" r="10.500"/><path d="M13 20L1 31"/></svg>
    <input aria-label="Search" placeholder="Type here to search" class="flex-1 pl-[22px] pt-[2px] text-[24px] text-[#333] placeholder:text-[#333] outline-none" />
  </div>

  <button aria-label="Cortana" class="w-[83px] grid place-items-center"><svg class="size-7" viewBox="0 0 28 28"><circle cx="14" cy="14" r="11" fill="none" stroke="#fff" stroke-width="3.500"/></svg></button>
  <button aria-label="Mail" class="w-[83px] grid place-items-center"><svg class="w-[42px] h-[34px]" viewBox="0 0 42 34"><path d="M0 11L20 0l22 11v22H0z" fill="#fff"/><path d="M1 11h40L24 19l11 10z" fill="#201e1d"/></svg></button>
  <button aria-label="Edge" class="w-[83px] grid place-items-center"><svg class="size-9" viewBox="0 0 36 36"><path d="M1 16C3 6 10 0 19 0c11 0 16 8 16 16v4H13c0 6 5 9 11 9 4 0 7-1 10-3v7c-3 2-7 3-11 3C12 36 5 30 5 21c0-5 3-9 8-12-6 0-10 3-12 7zm12-2h13c0-4-2-6-6-6s-7 2-7 6z" fill="#0078d7"/></svg></button>
  <button aria-label="Outlook" class="w-[83px] grid place-items-center"><svg class="w-[40px] h-[38px]" viewBox="0 0 40 38"><path d="M12 1h27v18H12z" fill="#0a64b8"/><path d="M21 7h9v9h-9z" fill="#1a88e0"/><path d="M30 7h9v9h-9z" fill="#4cc8f8"/><path d="M12 16h27v20a2 2 0 0 1-2 2H12z" fill="#1470c8"/><path d="M39 19L14 37h23l2-2z" fill="#36b4f0"/><path d="M12 24l20 13H12z" fill="#2090e0"/><rect y="8" width="21" height="21" rx="2" fill="#0b63b5"/><text x="4" y="24" fill="#fff" font-size="16" font-weight="bold">O</text></svg></button>
  <button aria-label="Sticky notes" class="w-[83px] grid place-items-center"><svg class="w-[34px] h-[36px]" viewBox="0 0 34 36"><path d="M0 0h34v18L18 35H0z" fill="#ffe400"/><path d="M18 18h16L18 35z" fill="#221f1c"/><path d="M34 18v17H18z" fill="#ffe400"/></svg></button>
  <button aria-label="Firefox" class="w-[83px] grid place-items-center"><svg class="size-[38px]" viewBox="0 0 38 38"><defs><linearGradient id="fx" x1=".8" y1="0" x2=".3" y2="1"><stop stop-color="#ffe226"/><stop offset=".5" stop-color="#ff8a1a"/><stop offset="1" stop-color="#f0246e"/></linearGradient></defs><path d="M23 0c2 4 4 5 7 8 5 5 6 9 6 13 0 10-8 16-17 16S1 30 1 21c0-5 2-8 4-10l1-4 4 4c2-1 4-1 6-1 2-4 4-7 7-10z" fill="url(#fx)"/><circle cx="19" cy="20" r="8" fill="#7a3ee0"/><path d="M7 12c4-2 9-1 11 3-4 0-6 2-7 4-2-1-4-4-4-7z" fill="#ff9a20"/></svg></button>
  <button aria-label="File Explorer" class="w-[83px] grid place-items-center relative"><svg class="w-[36px] h-[32px]" viewBox="0 0 36 32"><path d="M0 0h14l3 4v6H0z" fill="#e0a010"/><path d="M0 5h36v24H0z" fill="#fcd364"/><path d="M7 32V18c0-2 1-3 3-3h16c2 0 3 1 3 3v14h-6v-8H13v8z" fill="#3c96dc"/></svg><span class="absolute bottom-0 inset-x-2 h-1 bg-[#fad9ab]"></span></button>
  <button aria-label="Chrome" class="w-[83px] grid place-items-center"><svg class="size-[38px]" viewBox="0 0 38 38"><circle cx="19" cy="19" r="18.500" fill="#fccb45"/><path d="M3 9.500A18.500 18.500 0 0 1 35 10H19l-8 13z" fill="#de4a3c"/><path d="M3 9.500l8 14 8 4-4 9.500A18.500 18.500 0 0 1 3 9.500z" fill="#1ca05c"/><circle cx="19" cy="19" r="9" fill="#fff"/><circle cx="19" cy="19" r="7" fill="#4a86f2"/></svg></button>
  <button aria-label="Excel" class="w-[83px] grid place-items-center relative"><svg class="w-[40px] h-[38px]" viewBox="0 0 40 38"><path d="M10 0h29v38H10z" fill="#185c37"/><path d="M10 0h15v10H10zM10 10h15v9H10z" fill="#21a366"/><path d="M25 0h14v10H25z" fill="#33c481"/><path d="M25 10h14v9H25z" fill="#21a366"/><path d="M10 19h29v9H10z" fill="#107c41"/><rect y="8" width="20" height="22" rx="2" fill="#107c41"/><text x="4" y="25" fill="#fff" font-size="17" font-weight="bold">X</text></svg><span class="absolute bottom-0 inset-x-2 h-1 bg-[#fad9ab]"></span></button>
  <button aria-label="SAP Logon" class="w-[83px] grid place-items-center relative bg-[#4e4c4a] border-r-6 border-[#5a5856]"><svg class="size-[40px]" viewBox="0 0 40 40"><path d="M1 1h26l-6 8H10v18l-8 8z" fill="#3a72b4" stroke="#10233e"/><path d="M31 1c9 5 10 20 3 28-5 6-12 6-14 5l-7 6-4-4V13h18l-5 5c5 0 9-8 9-17z" fill="#ffae0a" stroke="#402a04"/><path d="M31 1c7 5 9 14 5 22-1-8-3-10-7-9 2-4 3-8 2-13z" fill="#8a6a20"/></svg><span class="absolute bottom-0 inset-x-0 h-1 bg-[#fad9ab]"></span></button>
  <button aria-label="Word" class="w-[83px] grid place-items-center relative"><svg class="w-[40px] h-[38px]" viewBox="0 0 40 38"><path d="M10 0h29v10H10z" fill="#41a5ee"/><path d="M10 10h29v9H10z" fill="#2b7cd3"/><path d="M10 19h29v9H10z" fill="#185abd"/><path d="M10 28h29v10H10z" fill="#103f91"/><rect y="8" width="20" height="22" rx="2" fill="#185abd"/><text x="2" y="25" fill="#fff" font-size="16" font-weight="bold">W</text></svg><span class="absolute bottom-0 inset-x-2 h-1 bg-[#fad9ab]"></span></button>
  <button aria-label="Snipping Tool" class="w-[83px] grid place-items-center relative"><svg class="size-[38px]" viewBox="0 0 38 38"><ellipse cx="11" cy="22" rx="10" ry="6" fill="#9a8c8c"/><ellipse cx="18" cy="11" rx="17" ry="9" transform="rotate(-18 18 11)" fill="#f4f4f4" stroke="#c03030"/><path d="M12 9l12 14M19 3l3 20" stroke="#999" stroke-width="2"/><g fill="none" stroke="#1c8ad0" stroke-width="3"><ellipse cx="30" cy="24" rx="6" ry="4" transform="rotate(20 30 24)"/><ellipse cx="22" cy="31" rx="4" ry="6"/></g></svg><span class="absolute bottom-0 inset-x-2 h-1 bg-[#fad9ab]"></span></button>

  <div class="ml-auto flex items-center">
    <svg class="w-[23px] h-[13px] mr-[28px]" viewBox="0 0 23 13" fill="none" stroke="#fff" stroke-width="2"><path d="M1 12L11.500 1 22 12"/></svg>
    <svg class="w-[28px] h-[20px] mr-[24px]" viewBox="0 0 28 20" fill="none" stroke="#fff" stroke-width="1.800"><path d="M10 5h15v12H8"/><path d="M12 8h10v6H12z" fill="#fff"/><path d="M27 8v5"/><path d="M1 4h7v4c0 4-7 4-7 0zM3 0v4M6 0v4M4 11v8"/></svg>
    <div class="pt-[2px] text-[19px] leading-[31px] text-center">12:33 PM<br />11/3/2019</div>
    <button aria-label="Notifications, 6 new" class="relative mt-[10px] ml-[30px] mr-[21px] size-10">
      <svg viewBox="0 0 40 40"><path d="M0 1h27v21H15l-4 6v-6H0z" fill="#fff"/><path d="M5 7h17M5 12h17M5 17h10" stroke="#222" stroke-width="1.500"/><circle cx="26" cy="26" r="13.500" fill="#333" stroke="#888"/><text x="21" y="33" fill="#fff" font-size="18" font-weight="600">6</text></svg>
    </button>
    <span class="h-[67px] w-2 border-l-2 border-[#77716e]"></span>
  </div>
</div>

<script>
  // item rows: only the first one is filled, the second one has the input focus
  const items = document.getElementById('items');

  for (let i = 0; i < 10; i++) {
    const filled = i === 0;
    const active = i === 1;
    const amount = filled ? '10.000,00' : '';
    const local = filled ? '10.000,00' : '0,00';

    const check = filled
      ? '<svg class="mx-auto w-[26px] h-[22px]" viewBox="0 0 26 22"><path d="M1 11l5-3 4 5L22 1l3 2-14 18z" fill="#3c9c10" stroke="#111" stroke-width="1.500"/></svg>'
      : '';

    // red corners and the F4 help button
    const focus = active
      ? `<svg class="absolute inset-0 size-full" viewBox="0 0 140 28" preserveAspectRatio="none" fill="none" stroke="#e81010" stroke-width="2"><path d="M8 1H1v8M132 1h7v8M8 27H1v-8M132 27h7v-8"/></svg>
         <button aria-label="Search help" class="absolute z-10 left-full top-0 w-7 h-7 grid place-items-center border border-[#9fb0c4] bg-[#cfdcea]"><svg class="size-[21px]" viewBox="0 0 21 21" fill="#fff" stroke="#333" stroke-width="1.500"><path d="M7 2h13v12H7z" fill="#a9b0b8"/><path d="M1 6h13v12H1z"/></svg></button>`
      : '';

    const glColor = filled ? 'bg-[#deebf5]' : active ? 'bg-[#feec9c]' : 'bg-white';

    items.insertAdjacentHTML('beforeend', `
      <tr class="odd:h-[28px] even:h-[29px] bg-white whitespace-nowrap">
        <td class="p-0 border-b border-[#b4bac4] bg-[#cdd2db]"></td>
        <td class="p-0 bg-[#c9c7b4]"><button aria-label="Item status ${i + 1}" class="block w-full h-[27px] border border-[#8f8a70] bg-linear-to-b from-[#fff3c4] to-[#feeaa2] to-30%">${check}</button></td>
        <td class="p-0 relative border-b border-[#d3dae3] ${glColor}"><input aria-label="G/L account ${i + 1}" value="${filled ? '300001' : ''}" class="block w-full h-[26px] pl-px outline-none text-[22px] text-[#555] font-['Liberation_Mono',monospace]" />${focus}</td>
        <td class="p-0 border-b border-[#cbd9e6] bg-[#deebf5] border-x">${filled ? 'Domestic Sales' : ''}</td>
        <td class="p-0 relative border-b border-r border-[#d3dae3]"><select aria-label="Debit/Credit ${i + 1}" class="block appearance-none w-[75px] h-[26px] pl-0 overflow-hidden text-clip outline-none text-[22px] leading-6 text-[#555] font-['Liberation_Mono',monospace]"><option>H Cre.</option></select><svg class="absolute right-[6px] top-2 w-4 h-[10px] pointer-events-none"><use href="#arrow"/></svg></td>
        <td class="p-0 border-b border-[#d3dae3]"><input aria-label="Amount ${i + 1}" value="${amount}" class="block w-full h-[26px] pr-[14px] text-right outline-none text-[22px] text-[#444] font-['Liberation_Mono',monospace]" /></td>
        <td class="p-0 pr-px text-right leading-[26px] border-b border-x border-[#cbd9e6] bg-[#deebf5] text-[22px] text-[#444] font-['Liberation_Mono',monospace]">${local}</td>
        <td class="p-0 border-b border-r border-[#d3dae3]"></td>
        <td class="p-0 border-b border-r border-[#d3dae3]"></td>
        <td class="p-0 border-b border-[#cbd9e6] bg-[#deebf5]"><input type="checkbox" aria-label="W/o discount ${i + 1}" class="block appearance-none w-[20px] h-[22px] rounded-xs border-2 border-[#8c8c8c] bg-white" /></td>
        <td class="p-0 border-b border-[#d3dae3]"></td>
      </tr>`);
  }
</script>

</body>
</html>
